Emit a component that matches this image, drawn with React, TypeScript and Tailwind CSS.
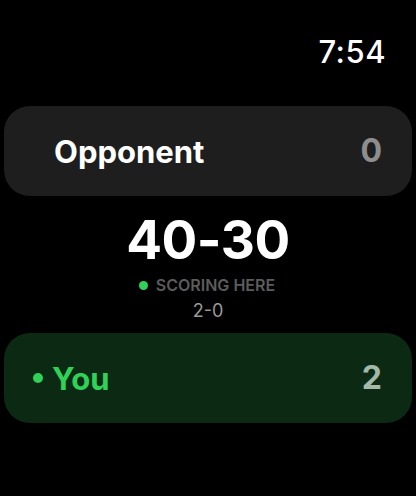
import React from 'react';

const App: React.FC = () => {
  return (
    <div className="w-[416px] h-[496px] bg-black text-white flex flex-col px-1 font-['Inter','Liberation_Sans',sans-serif]">
      <div className="flex justify-end pt-[34px] pr-[26px] h-[106px]">
        <span className="text-[31px] leading-[36px] font-medium tracking-[0.5px]">7:54</span>
      </div>

      <div className="h-[90px] rounded-[26px] bg-[#1e1e1e] flex items-center justify-between pl-[50px] pr-[30px]">
        <span className="text-[31px] font-bold leading-none">Opponent</span>
        <span className="text-[32px] font-bold leading-none text-[#8e8e8e]">0</span>
      </div>

      <div className="flex flex-col items-center pt-[18px]">
        <span className="text-[53px] font-bold leading-[52px] tracking-[-0.5px]">40-30</span>
        <div className="flex items-center gap-[8px] mt-[10px] -ml-[2px]">
          <span className="w-[9px] h-[9px] rounded-full bg-[#30d158]" />
          <span className="text-[16px] font-semibold leading-[18px] text-[#5c5c5c]">SCORING HERE</span>
        </div>
        <span className="text-[18px] leading-[22px] text-[#9a9a9a] mt-[6px]">2-0</span>
      </div>

      <div className="mt-[11px] h-[90px] rounded-[26px] bg-[#0b2913] flex items-center justify-between pl-[29px] pr-[30px]">
        <div className="flex items-center gap-[9px]">
          <span className="w-[10px] h-[10px] rounded-full bg-[#30d158]" />
          <span className="text-[31px] font-bold leading-none text-[#30d158]">You</span>
        </div>
        <span className="text-[32px] font-bold leading-none text-[#a3b8a8]">2</span>
      </div>
    </div>
  );
};

export default App;
